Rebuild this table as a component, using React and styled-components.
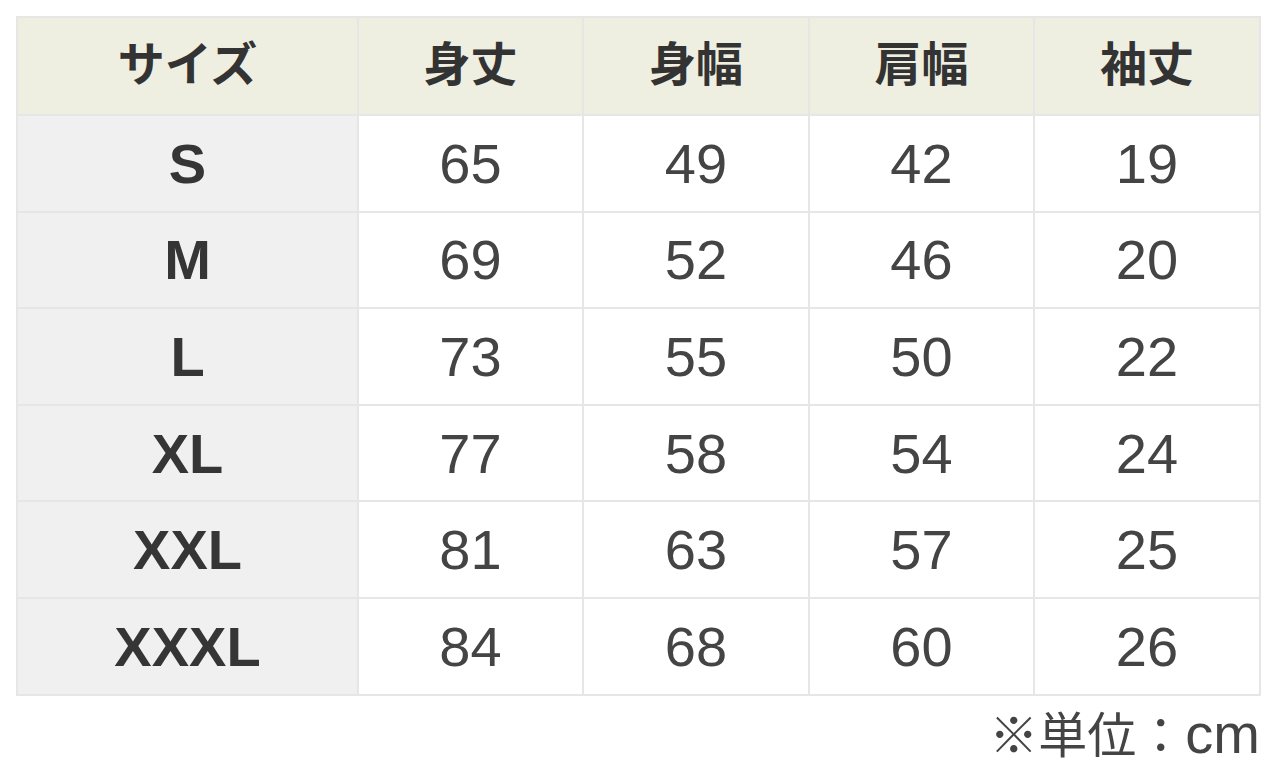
import React from 'react'
import styled, { createGlobalStyle } from 'styled-components'

const GlobalStyle = createGlobalStyle`
  html, body {
    margin: 0;
    padding: 0;
    background: #fff;
  }
  body {
    font-family: "Liberation Sans", "Noto Sans CJK JP", sans-serif;
    color: #333;
  }
`

const Wrapper = styled.div`
  width: 1244px;
  padding: 16px 0 0 16px;
`

const Table = styled.table`
  width: 100%;
  border-collapse: collapse;
  table-layout: fixed;
  border: 2px solid #e6e6e6;
`

const HeadCell = styled.th`
  height: 98px;
  padding: 0 0 4px;
  box-sizing: border-box;
  background-color: #efefe1;
  border: 2px solid #e6e6e6;
  font-family: "Liberation Sans", "Noto Sans CJK JP", sans-serif;
  font-size: 47px;
  font-weight: 700;
  line-height: 1;
  color: #333;
  text-align: center;
  vertical-align: middle;
`

const SizeCell = styled.th`
  height: 94.6px;
  padding: 0;
  background-color: #f0f0f0;
  border: 2px solid #e6e6e6;
  font-size: 56px;
  font-weight: 700;
  color: #353535;
  text-align: center;
`

const Cell = styled.td`
  height: 94.6px;
  padding: 0;
  background-color: #fff;
  border: 2px solid #e6e6e6;
  font-size: 56px;
  font-weight: 400;
  color: #444;
  text-align: center;
`

const Note = styled.p`
  margin: 10px 0 0;
  text-align: right;
  font-size: 49px;
  line-height: 56px;
  color: #444;
`

const Unit = styled.span`
  font-size: 56px;
`

const columns = ['サイズ', '身丈', '身幅', '肩幅', '袖丈']
const widths = [341, 225, 226, 225, 226]

const rows = [
  { size: 'S', values: [65, 49, 42, 19] },
  { size: 'M', values: [69, 52, 46, 20] },
  { size: 'L', values: [73, 55, 50, 22] },
  { size: 'XL', values: [77, 58, 54, 24] },
  { size: 'XXL', values: [81, 63, 57, 25] },
  { size: 'XXXL', values: [84, 68, 60, 26] },
]

export default function App() {
  return (
    <>
      <GlobalStyle />
      <Wrapper>
        <Table>
          <colgroup>
            {widths.map((w, i) => (
              <col key={i} style={{ width: w }} />
            ))}
          </colgroup>
          <thead>
            <tr>
              {columns.map(c => (
                <HeadCell key={c}>{c}</HeadCell>
              ))}
            </tr>
          </thead>
          <tbody>
            {rows.map(row => (
              <tr key={row.size}>
                <SizeCell>{row.size}</SizeCell>
                {row.values.map((v, i) => (
                  <Cell key={i}>{v}</Cell>
                ))}
              </tr>
            ))}
          </tbody>
        </Table>
        <Note>※単位：<Unit>cm</Unit></Note>
      </Wrapper>
    </>
  )
}
